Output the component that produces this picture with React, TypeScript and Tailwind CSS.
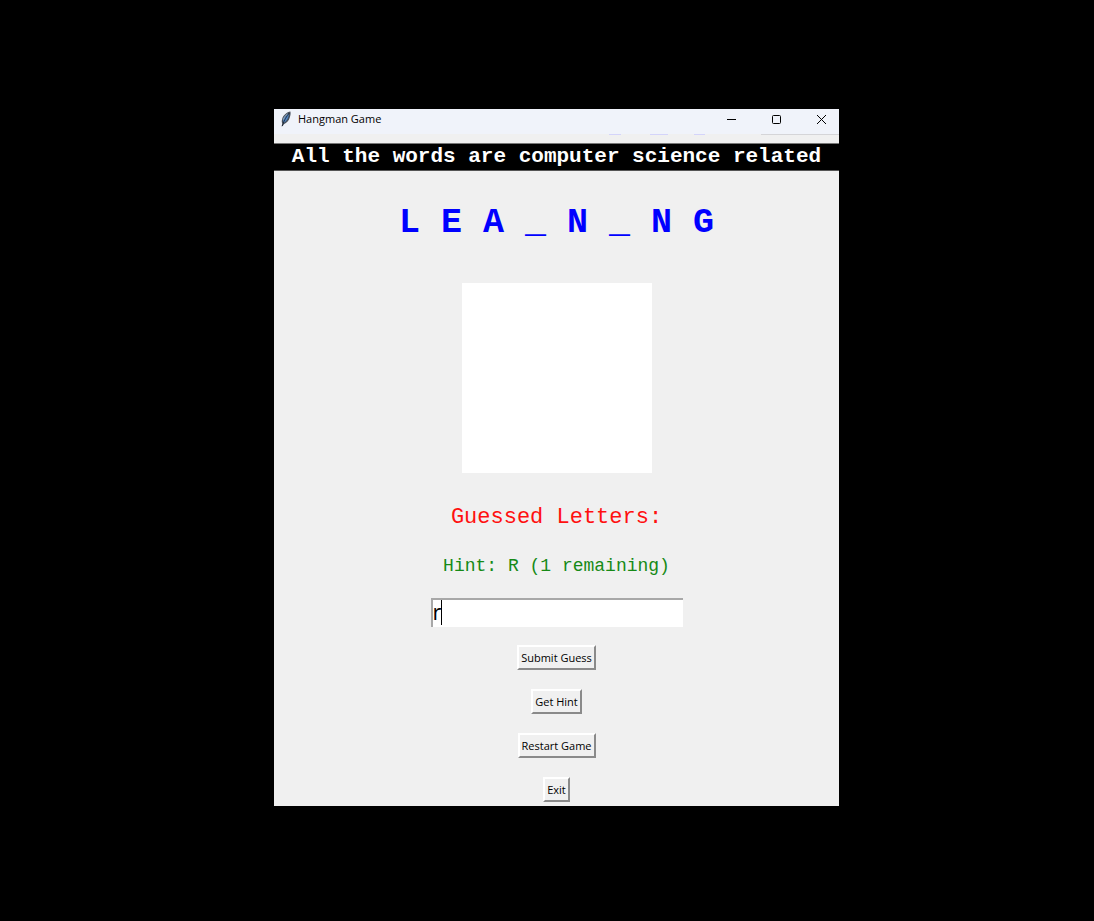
import { useState } from "react";
import type { ReactNode } from "react";

function Feather() {
  return (
    <svg width="12" height="16" viewBox="0 0 12 16" aria-hidden="true">
      <path d="M10.4 0.6C7 1.2 3.4 4 2.2 7.8C1.6 9.8 1.6 11.6 2.4 12.8L1.6 15.4L2.8 14.9L3.8 13.2C6.8 12.2 9 9.6 9.8 6.6C10.4 4.6 10.9 2.4 10.4 0.6Z" fill="#47505c" />
      <path d="M8.8 2.4C6.2 4 4 6.6 3.2 9.6L3.4 12C6.2 10.8 8 7.6 8.6 5Z" fill="#4f86c6" />
      <path d="M9.4 2C6.6 5 4.2 9 2.2 15" fill="none" stroke="#18212e" strokeWidth="0.8" />
      <path d="M7.6 2.8C5.4 4.4 3.8 6.6 3.2 8.8" fill="none" stroke="#a9c4de" strokeWidth="0.8" />
    </svg>
  );
}

function CaptionButton({ label, children }: { label: string; children: ReactNode }) {
  return (
    <button type="button" aria-label={label} className="flex h-[21px] w-[45px] items-center justify-center pl-[10px] text-black">
      <svg width="11" height="11" viewBox="0 0 11 11" fill="none" stroke="currentColor" aria-hidden="true">
        {children}
      </svg>
    </button>
  );
}

function GameButton({ children }: { children: ReactNode }) {
  return (
    <button
      type="button"
      className="h-[25px] border-2 border-t-white border-r-[#8a8a8a] border-b-[#8a8a8a] border-l-white bg-[#f0f0f0] px-[2px] font-['Open_Sans','Noto_Sans',sans-serif] text-[11px] leading-[20px] whitespace-nowrap text-black"
    >
      {children}
    </button>
  );
}

export default function App() {
  const [guess, setGuess] = useState("r");

  return (
    <div className="grid min-h-screen grid-cols-[274fr_565fr_255fr] items-start bg-black py-[109px]">
      <main className="col-start-2 bg-[#f0f0f0] pb-[4px]">
        <header className="flex h-[25px] items-start justify-between bg-[#f0f3fa]">
          <div className="flex items-center gap-[6px] pt-px pl-[6px]">
            <Feather />
            <h1 className="font-['Open_Sans','Noto_Sans',sans-serif] text-[11px] leading-[18px] text-black">Hangman Game</h1>
          </div>
          <div className="flex">
            <CaptionButton label="Minimize">
              <path d="M1 5.5H10" />
            </CaptionButton>
            <CaptionButton label="Maximize">
              <rect x="1.5" y="1.5" width="8" height="8" rx="1" />
            </CaptionButton>
            <CaptionButton label="Close">
              <path d="M1 1L10 10M10 1L1 10" />
            </CaptionButton>
          </div>
        </header>
        <div className="flex h-[9px] justify-end" aria-hidden="true">
          <span className="mr-[29px] h-px w-[12px] bg-[#d4d4fa]" />
          <span className="mr-[26px] h-px w-[18px] bg-[#d4d4fa]" />
          <span className="mr-[56px] h-px w-[11px] bg-[#d4d4fa]" />
          <span className="h-px w-[78px] bg-[#d5d5d8]" />
        </div>

        <p className="h-[28px] border-y border-t-[#777777] border-b-[#555555] bg-black text-center font-['Courier_New','Liberation_Mono',monospace] text-[21px] leading-[26px] font-bold whitespace-nowrap text-white">
          All the words are computer science related
        </p>

        <div className="flex flex-col items-center font-['Courier_New','Liberation_Mono',monospace]">
          <p className="mt-[32px] text-[35px] leading-[40px] font-bold whitespace-nowrap text-[#0000ff]">L E A _ N _ N G</p>
          <div className="mt-[40px] size-[190px] bg-white" />
          <p className="mt-[32px] text-[22px] leading-[26px] whitespace-nowrap text-[#ff1010]">Guessed Letters:</p>
          <p className="mt-[25px] text-[18px] leading-[20px] whitespace-nowrap text-[#168a16]">Hint: R (1 remaining)</p>
          <div className="relative mt-[22px] h-[29px] w-[252px]">
            <input
              aria-label="Guess a letter"
              value={guess}
              maxLength={1}
              onChange={(event) => setGuess(event.target.value)}
              className="size-full border-t-2 border-l-2 border-[#a8a8a8] bg-white pb-[6px] font-['Open_Sans','Noto_Sans',sans-serif] text-[22px] leading-[20px] text-black outline-none"
            />
            <span className="absolute top-[2px] left-[10px] h-[25px] w-px bg-black" aria-hidden="true" />
          </div>
          <div className="mt-[18px] flex flex-col items-center gap-[19px]">
            <GameButton>Submit Guess</GameButton>
            <GameButton>Get Hint</GameButton>
            <GameButton>Restart Game</GameButton>
            <GameButton>Exit</GameButton>
          </div>
        </div>
      </main>
    </div>
  );
}
